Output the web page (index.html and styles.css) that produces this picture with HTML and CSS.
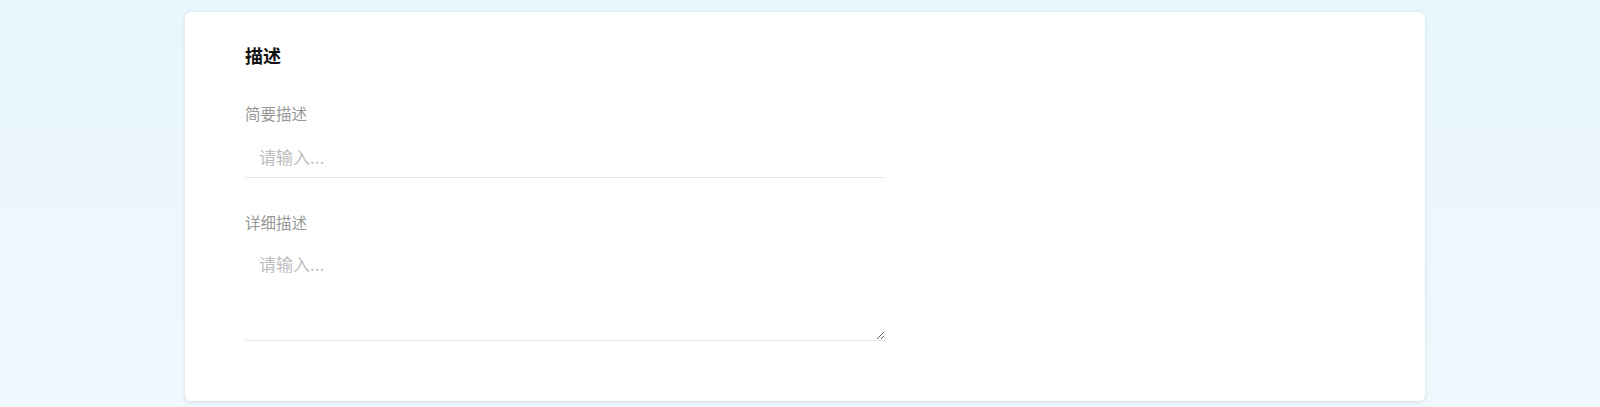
FILE: index.html
```html
<!DOCTYPE html>
<html lang="zh">
<head>
<meta charset="utf-8">
<title>描述</title>
<link rel="stylesheet" href="styles.css">
</head>
<body>
<main class="page">
  <section class="card">
    <h2 class="card-title">描述</h2>
    <div class="field">
      <label class="field-label" for="brief">简要描述</label>
      <input class="field-input" id="brief" type="text" placeholder="请输入...">
    </div>
    <div class="field">
      <label class="field-label" for="detail">详细描述</label>
      <textarea class="field-textarea" id="detail" placeholder="请输入..."></textarea>
    </div>
  </section>
</main>
</body>
</html>
```
FILE: styles.css
```css
html, body {
  margin: 0;
  padding: 0;
}
body {
  min-height: 407px;
  background: linear-gradient(180deg, #e8f6fd 0%, #f0f8fd 100%);
  font-family: "Noto Sans CJK SC", "Noto Sans", sans-serif;
}
.page {
  display: flex;
  padding: 12px 0 6px 185px;
}
.card {
  box-sizing: border-box;
  width: 1240px;
  background: #fff;
  border-radius: 6px;
  box-shadow: 0 1px 4px rgba(40, 60, 80, 0.14);
  padding: 31px 60px 60px;
  display: flex;
  flex-direction: column;
}
.card-title {
  margin: 0 0 36px;
  font-size: 18px;
  line-height: 24px;
  font-weight: 700;
  color: #111;
}
.field {
  display: flex;
  flex-direction: column;
  width: 640px;
}
.field + .field {
  margin-top: 34px;
}
.field-label {
  font-size: 15.5px;
  line-height: 20px;
  color: #979797;
  margin-bottom: 14px;
}
.field-input,
.field-textarea {
  box-sizing: border-box;
  width: 640px;
  border: none;
  border-bottom: 1px solid #e6e6e6;
  outline: none;
  background: transparent;
  font-family: "Noto Sans CJK SC", "Noto Sans", sans-serif;
  font-size: 17px;
  color: #333;
  padding: 0 14px;
  margin: 0;
}
.field-input {
  height: 41px;
  line-height: 38px;
  padding-bottom: 2px;
}
.field-textarea {
  height: 95px;
  padding-top: 6px;
  line-height: 24px;
  resize: vertical;
}
.field-input::placeholder,
.field-textarea::placeholder {
  color: #bdbdbd;
}
```
